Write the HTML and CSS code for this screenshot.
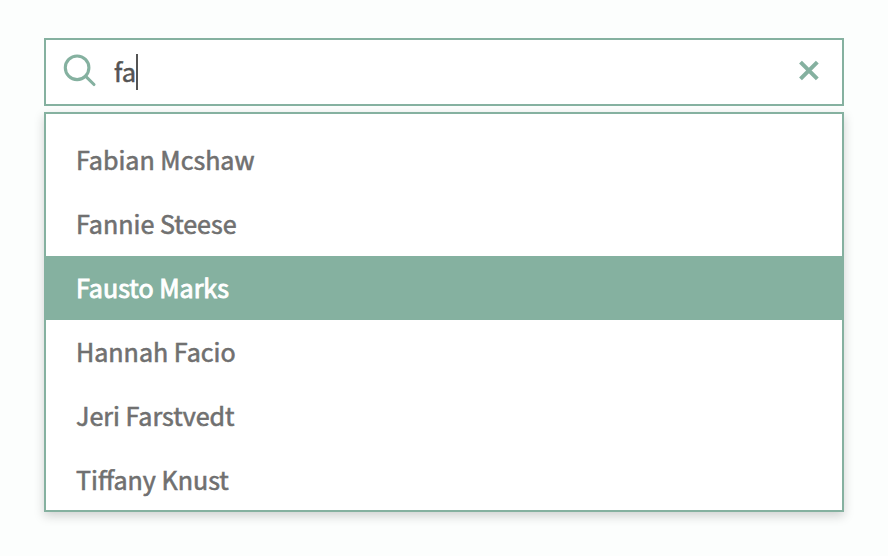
FILE: index.html
```html
<!DOCTYPE html>
<html lang="en">
<head>
<meta charset="utf-8">
<title>People search</title>
<link rel="stylesheet" href="styles.css">
</head>
<body>
<main class="autocomplete">
  <div class="search">
    <svg class="search-icon" viewBox="0 0 34 34"><circle cx="14.1" cy="13.8" r="11.8"/><path d="M22.5 22.2L31 30.5"/></svg>
    <div class="query"><span>fa</span><i class="caret"></i></div>
    <svg class="clear-icon" viewBox="0 0 22 22"><path d="M2.5 2.1L19.3 18.9M19.3 2.1L2.5 18.9"/></svg>
  </div>
  <ul class="results">
    <li><span>Fabian Mcshaw</span></li>
    <li><span>Fannie Steese</span></li>
    <li class="selected"><span>Fausto Marks</span></li>
    <li><span>Hannah Facio</span></li>
    <li><span>Jeri Farstvedt</span></li>
    <li><span>Tiffany Knust</span></li>
  </ul>
</main>
</body>
</html>
```
FILE: styles.css
```css
* { box-sizing: border-box; }
body {
  margin: 0;
  height: 556px;
  overflow: hidden;
  background: #fcfefd;
  font-family: "Noto Sans CJK SC", sans-serif;
  font-size: 25.05px;
  color: #707070;
}
.autocomplete { width: 800px; margin: 0 auto; padding-top: 38px; }
.search {
  display: flex;
  align-items: flex-start;
  height: 68px;
  border: 2px solid #85b1a0;
  background: #fff;
  padding: 14px 22px 0 17px;
}
.search-icon, .clear-icon { fill: none; stroke: #85b1a0; }
.search-icon { width: 34px; height: 34px; stroke-width: 3.1; stroke-linecap: round; }
.query {
  flex: 1;
  display: flex;
  height: 36px;
  line-height: 34px;
  margin-left: 17px;
  font-size: 25.5px;
  color: #545454;
  -webkit-text-stroke: .5px currentColor;
}
.caret { width: 2px; height: 36px; background: #545454; }
.clear-icon { width: 22px; height: 22px; margin-top: 6px; stroke-width: 4; }
.results {
  list-style: none;
  height: 400px;
  margin: 6px 0 0;
  padding: 14px 0 0;
  border: 2px solid #85b1a0;
  background: #fff;
  box-shadow: 0 4px 10px rgba(0, 0, 0, .18);
}
.results li {
  height: 64px;
  line-height: 62px;
  padding-left: 30px;
  -webkit-text-stroke: .6px currentColor;
}
.results .selected {
  background: #85b1a0;
  color: #fff;
  -webkit-text-stroke-width: .9px;
}
```
